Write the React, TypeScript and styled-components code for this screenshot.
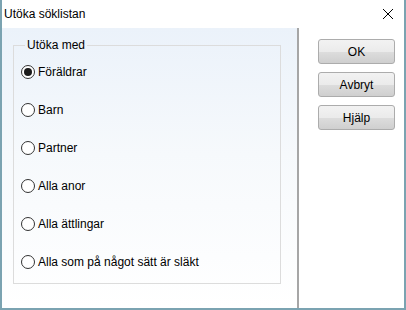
import styled, { createGlobalStyle } from 'styled-components'

const GlobalStyle = createGlobalStyle`
  html, body {
    margin: 0;
    padding: 0;
    background: #ffffff;
  }
  body {
    font-family: "Liberation Sans", Arial, sans-serif;
    font-size: 12px;
    color: #000;
  }
`

const Window = styled.div`
  width: 406px;
  height: 310px;
  box-sizing: border-box;
  display: flex;
  flex-direction: column;
  background: #ffffff;
  border: 2px solid #7ba3b1;
  border-top: none;
`

const TitleBar = styled.div`
  height: 28px;
  flex-shrink: 0;
  display: flex;
  align-items: center;
  justify-content: space-between;
  padding: 0 8px 0 2px;
  background: #ffffff;
`

const Title = styled.span`
  font-size: 12px;
  line-height: 1;
`

const CloseIcon = styled.svg`
  width: 12px;
  height: 12px;
  margin-right: 2px;
`

const Body = styled.div`
  flex: 1;
  display: flex;
  min-height: 0;
`

const MainPanel = styled.div`
  width: 297px;
  flex-shrink: 0;
  box-sizing: border-box;
  padding: 10px 16px 24px 11px;
  background: linear-gradient(to bottom, #ebf2fa 0%, #f6f9fc 45%, #ffffff 100%);
  border-right: 2px solid #a6a6a6;
`

const Group = styled.fieldset`
  margin: 0;
  height: 100%;
  box-sizing: border-box;
  border: 1px solid #dcdcdc;
  padding: 10px 0 0 7px;
  display: flex;
  flex-direction: column;
  gap: 18px;
`

const Legend = styled.legend`
  padding: 0 2px;
  margin-left: 4px;
  font-size: 12px;
  line-height: 14px;
`

const Option = styled.label`
  display: flex;
  align-items: center;
  gap: 3px;
  height: 20px;
  font-size: 12px;
  cursor: default;
`

const Radio = styled.span<{ $checked?: boolean }>`
  width: 12px;
  height: 12px;
  border: 1px solid #333333;
  border-radius: 50%;
  background: #ffffff;
  display: flex;
  align-items: center;
  justify-content: center;

  &::after {
    content: '';
    width: 8px;
    height: 8px;
    border-radius: 50%;
    background: ${p => (p.$checked ? '#1a1a1a' : 'transparent')};
  }
`

const SidePanel = styled.div`
  flex: 1;
  display: flex;
  flex-direction: column;
  align-items: center;
  gap: 8px;
  padding: 11px 6px 0 16px;
  background: #ffffff;
`

const Button = styled.button`
  width: 77px;
  height: 25px;
  box-sizing: border-box;
  border: 1px solid #acacac;
  border-radius: 3px;
  background: linear-gradient(to bottom, #f2f2f2 0%, #ebebeb 50%, #dddddd 51%, #cfcfcf 100%);
  font-family: "Liberation Sans", Arial, sans-serif;
  font-size: 12px;
  color: #000;
  padding: 0;
`

const options = [
  'Föräldrar',
  'Barn',
  'Partner',
  'Alla anor',
  'Alla ättlingar',
  'Alla som på något sätt är släkt',
]

export default function App() {
  return (
    <>
      <GlobalStyle />
      <Window>
        <TitleBar>
          <Title>Utöka söklistan</Title>
          <CloseIcon viewBox="0 0 12 12">
            <path d="M1 1 L11 11 M11 1 L1 11" stroke="#000" strokeWidth="1" fill="none" />
          </CloseIcon>
        </TitleBar>
        <Body>
          <MainPanel>
            <Group>
              <Legend>Utöka med</Legend>
              {options.map((o, i) => (
                <Option key={o}>
                  <Radio $checked={i === 0} />
                  {o}
                </Option>
              ))}
            </Group>
          </MainPanel>
          <SidePanel>
            <Button>OK</Button>
            <Button>Avbryt</Button>
            <Button>Hjälp</Button>
          </SidePanel>
        </Body>
      </Window>
    </>
  )
}
